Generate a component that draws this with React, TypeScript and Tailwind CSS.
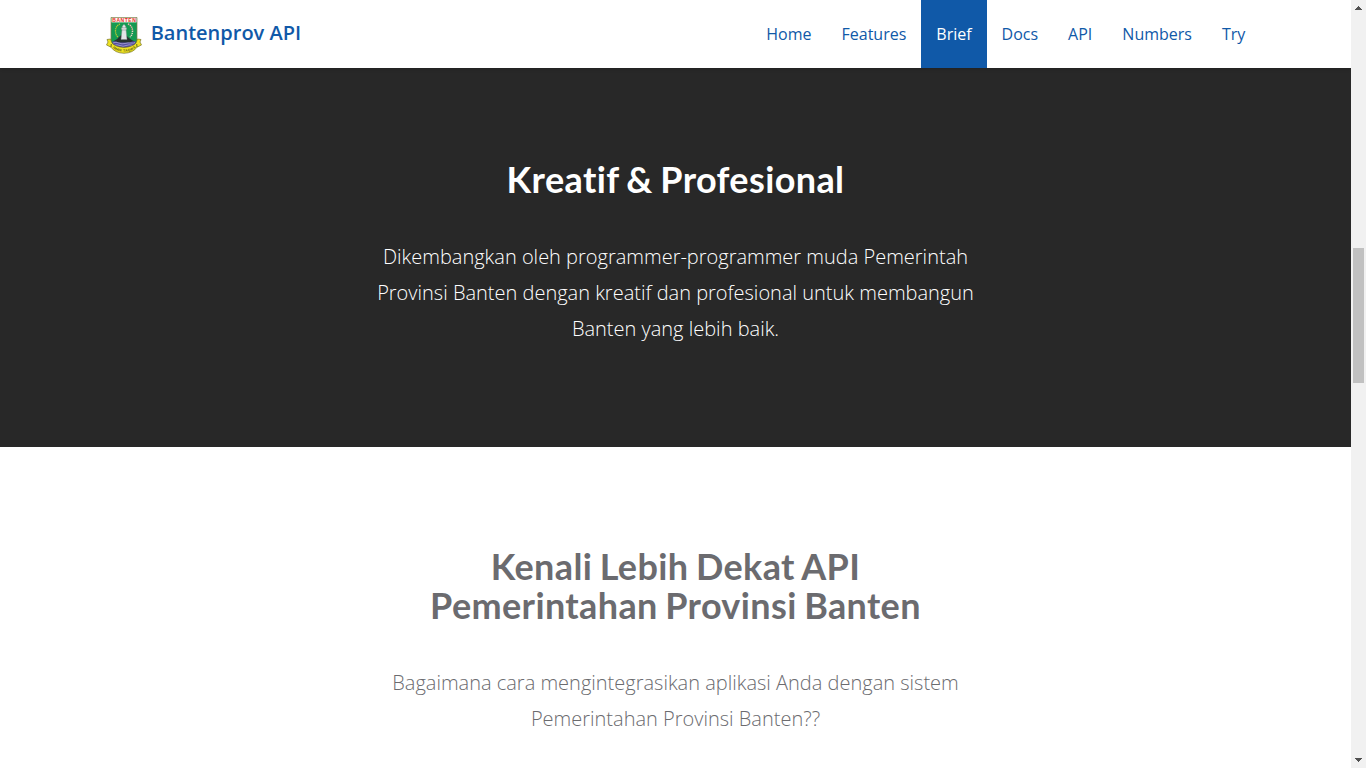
import React from "react";

const links = ["Home", "Features", "Brief", "Docs", "API", "Numbers", "Try"];

function Crest() {
  return (
    <svg width="36" height="37" viewBox="0 0 36 37" className="shrink-0">
      <path d="M5 .5H31V25Q29 31 18 35Q7 31 5 25Z" fill="#149a52" stroke="#8b7a48" strokeWidth=".7" />
      <rect x="5.5" y=".8" width="25" height="4.6" fill="#fff5f0" />
      <text x="18" y="4.700" textAnchor="middle" textLength="23.500" className="fill-[#e8302a] font-['Liberation_Sans'] text-[5px] font-bold">BANTEN</text>
      <path d="M14 7Q9.500 9 9.500 14Q9.500 18 12 20" fill="none" stroke="#b7c735" strokeWidth="1.300" strokeDasharray="1.300 .7" />
      <path d="M22 7Q26.500 9 26.500 14Q26.500 18 24 20" fill="none" stroke="#f0cfc5" strokeWidth="1.500" strokeDasharray="1.300 .8" />
      <path d="M22.700 7.500Q26 9.500 26 14" fill="none" stroke="#b6483d" strokeWidth=".6" strokeDasharray="1 1" />
      <path d="M7 24.500Q12 22 14.500 18.500H20.500Q23 22 29 24.500L25 26.500H11Z" fill="#27332f" />
      <path d="M6 24.500Q10 23.500 12 25.500H24Q27 23.500 30 24.500L28.500 29.500L18 32L7.500 29.500Z" fill="#544da0" />
      <path d="M7 26Q10 24.500 13 26T19 26.500T25 26T29 25.500M8 28.500Q11 27 14 28.500T20 28.500T27 28.500" fill="none" stroke="#c9c6e6" strokeWidth=".6" />
      <path d="M15 22.500L16 12.500H15.400V10.800H16.300V9.200L18 7.300L19.700 9.200V10.800H20.600V12.500H20L21 22.500Z" fill="#e3e5e6" stroke="#7b8785" strokeWidth=".4" />
      <path d="M16.300 10.800H19.700M16 13H20" stroke="#75817f" strokeWidth=".5" />
      <path d="M1 22.500L4.500 22L6 26Q9 29.800 18 30.500Q27 29.800 30 26L31.500 22L35 22.500L34 25L35.500 28L31 30.200Q27 36 18 36.300Q9 36 5 30.200L.5 28L2 25Z" fill="#eee323" stroke="#65611e" strokeWidth=".6" />
      <path d="M5 30L5.300 27M31 30L30.700 27" stroke="#474720" strokeWidth=".8" />
      <path id="motto" d="M6 30Q9.500 34.500 18 34.800Q26.500 34.500 30 30" fill="none" />
      <text className="fill-[#686016] font-['Liberation_Sans'] text-[3.500px] font-bold">
        <textPath href="#motto" startOffset="1" textLength="25">IMAN TAQWA</textPath>
      </text>
    </svg>
  );
}

function Navbar() {
  return (
    <header className="relative z-10 flex h-[68px] shrink-0 items-stretch justify-between bg-white pr-[90.700px] pl-[106px] text-[#1059a8] shadow-[0_0_4px_rgba(0,0,0,0.3)]">
      <a className="flex items-center gap-[8.700px] pt-[2px]">
        <Crest />
        <span className="-mt-[5px] text-[20px] leading-5 font-semibold">Bantenprov API</span>
      </a>
      <nav className="flex">
        {links.map((label) => (
          <a
            key={label}
            className={label === "Brief" ? "flex items-center bg-[#1059a8] px-[15px] text-base text-white" : "flex items-center px-[15px] text-base"}
          >
            {label}
          </a>
        ))}
      </nav>
    </header>
  );
}

function Scrollbar() {
  return (
    <aside className="relative z-20 flex h-full w-[15px] shrink-0 flex-col items-center bg-[#f1f1f1]">
      <svg width="15" height="15" shapeRendering="crispEdges"><path d="M7 6h1v1h1v1h1v1h1v1H4V9h1V8h1V7h1Z" fill="#505050" /></svg>
      <div className="mt-[233px] h-[135px] w-[11px] bg-[#c1c1c1]" />
      <svg width="15" height="15" className="mt-auto" shapeRendering="crispEdges"><path d="M4 5h7v1h-1v1H9v1H8v1H7V8H6V7H5V6H4Z" fill="#505050" /></svg>
    </aside>
  );
}

export default function App() {
  return (
    <div className="flex h-[768px] w-full overflow-hidden bg-white font-['Open_Sans',sans-serif]">
      <div className="flex min-w-0 flex-1 flex-col">
        <Navbar />
        <section className="h-[379px] shrink-0 bg-[#282828] pt-[92px] text-center text-white">
          <h2 className="font-['Lato',sans-serif] text-[36px] leading-[39px] font-bold tracking-[0.38px] [word-spacing:-1.6px]">Kreatif &amp; Profesional</h2>
          <p className="mt-10 text-[20px] leading-9 font-light">
            Dikembangkan oleh programmer-programmer muda Pemerintah<br />
            Provinsi Banten dengan kreatif dan profesional untuk membangun<br />
            Banten yang lebih baik.
          </p>
        </section>
        <section className="flex-1 pt-[100px] text-center text-[#6b6b6f]">
          <h2 className="font-['Lato',sans-serif] text-[36px] leading-[39px] font-bold tracking-[0.37px] [word-spacing:-1.6px]">
            Kenali Lebih Dekat API<br />Pemerintahan Provinsi Banten
          </h2>
          <p className="mt-10 text-[20px] leading-9 font-light">
            Bagaimana cara mengintegrasikan aplikasi Anda dengan sistem<br />
            Pemerintahan Provinsi Banten??
          </p>
        </section>
      </div>
      <Scrollbar />
    </div>
  );
}
